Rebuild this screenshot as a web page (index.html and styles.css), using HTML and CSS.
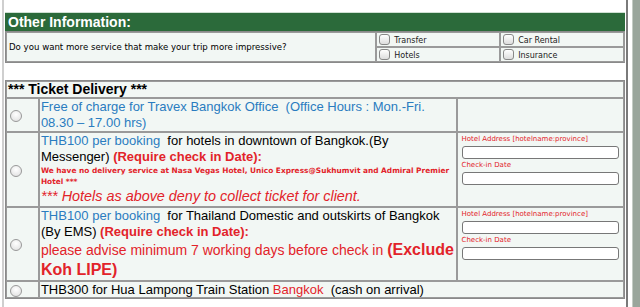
FILE: index.html
```html
<!DOCTYPE html>
<html>
<head>
<meta charset="utf-8">
<link rel="stylesheet" href="styles.css">
</head>
<body>
<div class="page">
  <div class="frame">
    <div class="section-head">Other Information:</div>
    <table class="svc">
      <tr>
        <td class="q" rowspan="2">Do you want more service that make your trip more impressive?</td>
        <td class="opt"><span class="cb"></span>Transfer</td>
        <td class="opt"><span class="cb"></span>Car Rental</td>
      </tr>
      <tr>
        <td class="opt"><span class="cb"></span>Hotels</td>
        <td class="opt"><span class="cb"></span>Insurance</td>
      </tr>
    </table>
    <table class="deliv">
      <tr><th colspan="3">*** Ticket Delivery ***</th></tr>
      <tr class="r1">
        <td class="rad"><span class="radio"></span></td>
        <td class="desc"><span class="blue">Free of charge for Travex Bangkok Office&nbsp; (Office Hours : Mon.-Fri. 08.30 – 17.00 hrs)</span></td>
        <td class="side"></td>
      </tr>
      <tr class="r2">
        <td class="rad"><span class="radio"></span></td>
        <td class="desc"><span class="blue">THB100 per booking</span>&nbsp; for hotels in downtown of Bangkok.(By Messenger) <b class="red">(Require check in Date):</b><div class="warn">We have no delivery service at Nasa Vegas Hotel, Unico Express@Sukhumvit and Admiral Premier Hotel ***</div><div class="deny">*** Hotels as above deny to collect ticket for client.</div></td>
        <td class="side">
          <div class="lbl">Hotel Address [hotelname:province]</div>
          <div class="inp"></div>
          <div class="lbl">Check-in Date</div>
          <div class="inp"></div>
        </td>
      </tr>
      <tr class="r3">
        <td class="rad"><span class="radio"></span></td>
        <td class="desc"><span class="blue">THB100 per booking</span>&nbsp; for Thailand Domestic and outskirts of Bangkok (By EMS) <b class="red">(Require check in Date):</b><br><span class="red adv">please advise minimum 7 working days before check in <b class="big">(Exclude Koh LIPE)</b></span></td>
        <td class="side">
          <div class="lbl">Hotel Address [hotelname:province]</div>
          <div class="inp"></div>
          <div class="lbl">Check-in Date</div>
          <div class="inp"></div>
        </td>
      </tr>
      <tr class="r4">
        <td class="rad"><span class="radio"></span></td>
        <td class="desc" colspan="2">THB300 for Hua Lampong Train Station <span class="red">Bangkok</span>&nbsp; (cash on arrival)</td>
      </tr>
    </table>
  </div>
  <div class="rail"></div>
</div>
</body>
</html>
```
FILE: styles.css
```css
html, body { margin: 0; padding: 0; background: #fff; }
body { font-family: "Liberation Sans", Arial, sans-serif; color: #000; }
.page { display: flex; height: 307px; overflow: hidden; }
.frame {
  margin-left: 2px;
  border-left: 2px solid #cfcfcf;
  border-right: 2px solid #7a7a7a;
  padding: 12px 1px 0 1px;
  width: 620px;
}
.rail {
  margin-left: 4px;
  width: 9px;
  background: #9aa69c;
  border-left: 1px solid #c4ccc5;
}
.section-head {
  background: #2b6a3a;
  color: #fff;
  font-weight: bold;
  font-size: 14px;
  line-height: 18px;
  padding-left: 3px;
  border-top: 1px solid #cfe0d3;
}
table { border-collapse: separate; border-spacing: 0; width: 620px; background: #f2f7f4; }
.svc { border: 1px solid #8a8a8a; border-right-color: #999; }
.svc td { border: 1px solid #9a9a9a; padding: 0 2px; height: 13px; }
.svc .q { font-family: "DejaVu Sans", Verdana, sans-serif; font-size: 8.6px; width: 365px; padding-left: 2px; }
.svc .opt { font-family: "DejaVu Sans", Verdana, sans-serif; font-size: 8px; color: #222; width: 118px; }
.cb {
  display: inline-block; width: 9px; height: 9px; border: 1px solid #888; border-radius: 3px;
  background: linear-gradient(#fff, #ddd); vertical-align: -2px; margin-right: 4px;
}
.deliv { margin-top: 17px; border: 1px solid #8a8a8a; font-size: 13px; }
.deliv th { text-align: left; font-size: 14px; line-height: 15px; padding: 0 1px; border: 1px solid #9a9a9a; }
.deliv td { border: 1px solid #9a9a9a; vertical-align: middle; }
.deliv .rad { width: 31px; padding: 0; text-align: left; }
.radio {
  display: inline-block; width: 10px; height: 10px; border-radius: 50%; border: 1px solid #999;
  background: radial-gradient(circle at 50% 35%, #fff, #ddd); margin-left: 3px; vertical-align: middle;
}
.deliv .desc { padding: 0 1px; line-height: 16px; width: 416px; }
.deliv .side { width: 158px; padding: 1px 4px 2px; vertical-align: top; }
.blue { color: #2a7cc0; }
.red { color: #e2232a; }
.warn { color: #e2232a; font-family: "DejaVu Sans", Verdana, sans-serif; font-weight: bold; font-size: 7.4px; line-height: 11px; }
.deny { color: #e2232a; font-style: italic; font-size: 14.4px; line-height: 19px; }
.adv { font-size: 14px; line-height: 19px; }
.big { font-size: 16px; }
.lbl { color: #e2232a; font-family: "DejaVu Sans", Verdana, sans-serif; font-size: 7px; line-height: 9px; margin-top: 1px; }
.inp { height: 11px; border: 1px solid #777; border-radius: 3px; background: #fff; margin: 2px 0 2px; }
.r4 .desc { line-height: 14px; }
```
